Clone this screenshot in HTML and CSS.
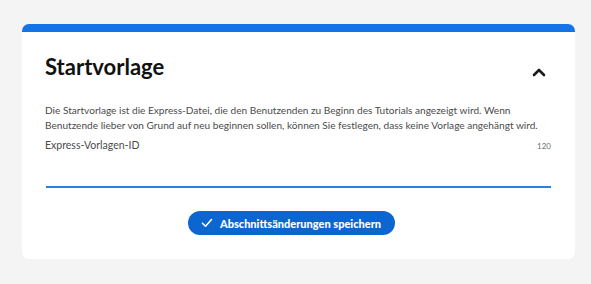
FILE: index.html
```html
<!DOCTYPE html>
<html lang="de">
<head>
    <meta charset="UTF-8">
    <meta name="viewport" content="width=device-width, initial-scale=1.0">
    <title>Startvorlage</title>
    <link rel="stylesheet" href="styles.css">
</head>
<body>
    <div class="card">
        <div class="card-head">
            <h2 class="title">Startvorlage</h2>
            <svg class="chevron" width="14" height="10" viewBox="0 0 14 10">
                <path d="M2 8 L7 3 L12 8" fill="none" stroke="#1b1b1b" stroke-width="2.6" stroke-linecap="round" stroke-linejoin="round"/>
            </svg>
        </div>
        <p class="desc">Die Startvorlage ist die Express-Datei, die den Benutzenden zu Beginn des Tutorials angezeigt wird. Wenn Benutzende lieber von Grund auf neu beginnen sollen, können Sie festlegen, dass keine Vorlage angehängt wird.</p>
        <div class="field">
            <div class="field-top">
                <label class="label">Express-Vorlagen-ID</label>
                <span class="count">120</span>
            </div>
            <div class="input"></div>
        </div>
        <div class="actions">
            <button class="save">
                <svg width="12" height="10" viewBox="0 0 12 10">
                    <path d="M1.5 5.2 L4.5 8.2 L10.5 1.5" fill="none" stroke="#fff" stroke-width="1.6" stroke-linecap="round" stroke-linejoin="round"/>
                </svg>
                Abschnittsänderungen speichern
            </button>
        </div>
    </div>
</body>
</html>
```

FILE: styles.css
```css
*{
    margin: 0;
    padding: 0;
    box-sizing: border-box;
    font-family: Lato, 'Noto Sans', sans-serif;
}
body{
    background: #f4f4f4;
    padding: 24px 16px 0 22px;
}
.card{
    width: 553px;
    height: 235px;
    background: #fff;
    border-top: 8px solid #1473e6;
    border-radius: 7px;
    padding: 0 24px 0 23px;
}
.card-head{
    display: flex;
    align-items: center;
    justify-content: space-between;
    padding-top: 15px;
    height: 53px;
}
.title{
    font-size: 22px;
    font-weight: 700;
    color: #111;
}
.chevron{
    margin-right: 5px;
    margin-top: 12px;
}
.desc{
    margin-top: 18px;
    font-size: 10.1px;
    line-height: 14.5px;
    color: #4b4b4b;
}
.field{
    margin-top: 7px;
}
.field-top{
    display: flex;
    justify-content: space-between;
    align-items: flex-end;
}
.label{
    font-size: 10.5px;
    color: #4b4b4b;
}
.count{
    font-size: 8px;
    color: #6e6e6e;
}
.input{
    margin-top: 35px;
    margin-left: 1px;
    height: 2px;
    background: #2d7fdc;
}
.actions{
    display: flex;
    justify-content: center;
    margin-top: 23px;
    padding-right: 13px;
}
.save{
    display: flex;
    align-items: center;
    gap: 7px;
    height: 24px;
    padding: 0 14px 0 13px;
    border: none;
    border-radius: 12px;
    background: #0d66d0;
    color: #fff;
    font-size: 11px;
    font-weight: 900;
}
```
